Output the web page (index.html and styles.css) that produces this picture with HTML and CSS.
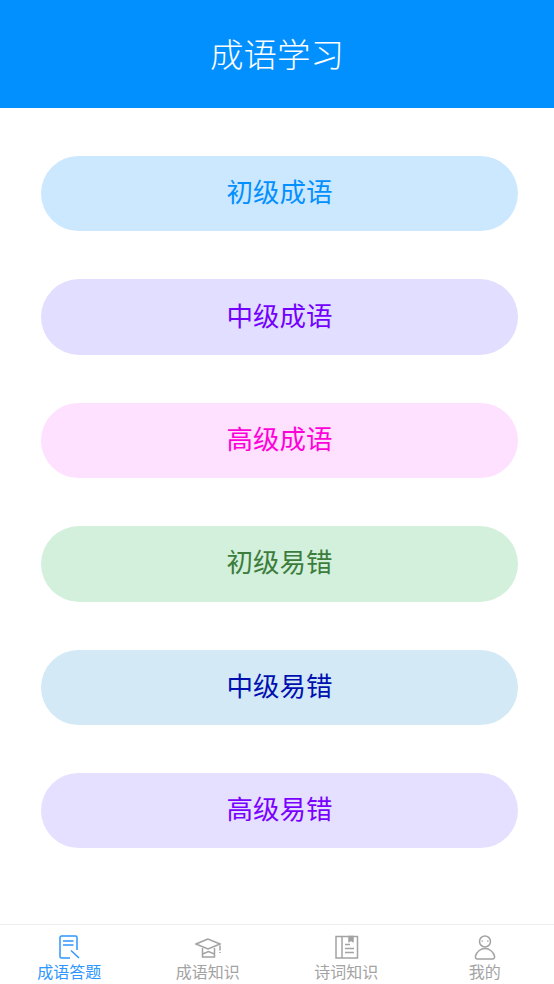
FILE: index.html
```html
<!DOCTYPE html>
<html lang="zh-CN">
<head>
    <meta charset="UTF-8">
    <meta name="viewport" content="width=device-width, initial-scale=1.0">
    <title>成语学习</title>
    <link rel="stylesheet" href="styles.css">
</head>
<body>
    <header class="app-header">成语学习</header>

    <main class="level-list">
        <a class="level-button level-blue">初级成语</a>
        <a class="level-button level-violet">中级成语</a>
        <a class="level-button level-pink">高级成语</a>
        <a class="level-button level-green">初级易错</a>
        <a class="level-button level-navy">中级易错</a>
        <a class="level-button level-purple">高级易错</a>
    </main>

    <nav class="tab-bar">
        <a class="tab tab-active">
            <svg class="tab-icon" viewBox="0 0 26 26" fill="none" stroke="currentColor" stroke-width="1.5">
                <path d="M21 15V2.500A1.500 1.500 0 0 0 19.500 1H5.500A1.500 1.500 0 0 0 4 2.500v19A1.500 1.500 0 0 0 5.500 23H14"/>
                <path d="M7 6h10.500M7 10h10.500"/>
                <path d="M15 15.500l8 7.500"/>
            </svg>
            <span>成语答题</span>
        </a>
        <a class="tab">
            <svg class="tab-icon" viewBox="0 0 26 26" fill="none" stroke="currentColor" stroke-width="1.500">
                <path d="M13 4L1 9l12 5 12-5z"/>
                <path d="M7.500 13v9h12v-9"/>
                <path d="M7.500 19l6-2.500 6 2.500"/>
                <path d="M25 10.500v5M25 17v1"/>
            </svg>
            <span>成语知识</span>
        </a>
        <a class="tab">
            <svg class="tab-icon" viewBox="0 0 26 26" fill="none" stroke="currentColor" stroke-width="1.500">
                <rect x="3" y="1.500" width="21.500" height="21.500"/>
                <path d="M9 1.500V23"/>
                <path d="M16 1.500h4v5l-2-1.200-2 1.200z" fill="currentColor"/>
                <path d="M12 9.500h5M12 13.500h9M12 17.500h9"/>
            </svg>
            <span>诗词知识</span>
        </a>
        <a class="tab">
            <svg class="tab-icon" viewBox="0 0 26 26" fill="none" stroke="currentColor" stroke-width="1.500">
                <circle cx="13" cy="6.500" r="5.500"/>
                <path d="M10.200 5.500v1.200M15.800 5.500v1.200"/>
                <path d="M5.500 24h15c1.500 0 2.500-1 2-3-1-4-5-7.500-9.500-7.500S4.500 17 3.500 21c-.5 2 .5 3 2 3z"/>
            </svg>
            <span>我的</span>
        </a>
    </nav>
</body>
</html>
```

FILE: styles.css
```css
html, body { height: 100%; }
body { margin: 0; display: flex; flex-direction: column; height: 984px; overflow: hidden; background-color: #fff; font-family: "Noto Sans CJK SC", "Noto Sans", sans-serif; }
.app-header { flex: none; height: 108px; box-sizing: border-box; padding-bottom: 4px; display: flex; align-items: center; justify-content: center; background-color: #0390ff; color: #fff; font-size: 33.500px; font-weight: 300; }
.level-list { flex: 1; display: flex; flex-direction: column; gap: 48px; padding: 48px 36px 0 41px; }
.level-button { height: 75.400px; box-sizing: border-box; padding-bottom: 6px; display: flex; align-items: center; justify-content: center; border-radius: 38px; font-size: 26.500px; }
.level-blue { background-color: #cce8ff; color: #0390ff; }
.level-violet { background-color: #e1deff; color: #7300ff; }
.level-pink { background-color: #fee0ff; color: #ff00d9; }
.level-green { background-color: #d3f0dc; color: #3c7d3c; }
.level-navy { background-color: #d3e9f5; color: #0010b0; }
.level-purple { background-color: #e5e0ff; color: #7a00ff; }
.tab-bar { flex: none; height: 59px; display: flex; border-top: 1px solid #eee; }
.tab { flex: 1; display: flex; flex-direction: column; align-items: center; padding-top: 10px; color: #a3a3a3; font-size: 16px; line-height: 21px; }
.tab-active { color: #2e96ff; }
.tab-icon { display: block; width: 26px; height: 26px; }
```
